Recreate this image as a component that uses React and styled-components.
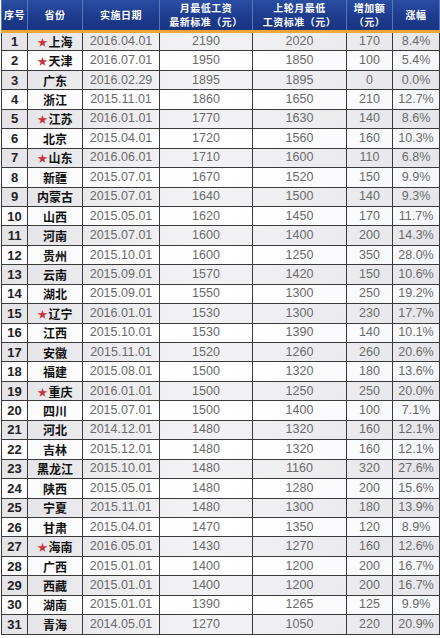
import styled, { createGlobalStyle } from 'styled-components'

const GlobalStyle = createGlobalStyle`
  html, body {
    margin: 0;
    padding: 0;
    background: #fff;
  }
  body {
    font-family: "Liberation Sans", "Noto Sans CJK SC", sans-serif;
  }
`

const rows = [
  [1, '上海', true, '2016.04.01', 2190, 2020, 170, '8.4%'],
  [2, '天津', true, '2016.07.01', 1950, 1850, 100, '5.4%'],
  [3, '广东', false, '2016.02.29', 1895, 1895, 0, '0.0%'],
  [4, '浙江', false, '2015.11.01', 1860, 1650, 210, '12.7%'],
  [5, '江苏', true, '2016.01.01', 1770, 1630, 140, '8.6%'],
  [6, '北京', false, '2015.04.01', 1720, 1560, 160, '10.3%'],
  [7, '山东', true, '2016.06.01', 1710, 1600, 110, '6.8%'],
  [8, '新疆', false, '2015.07.01', 1670, 1520, 150, '9.9%'],
  [9, '内蒙古', false, '2015.07.01', 1640, 1500, 140, '9.3%'],
  [10, '山西', false, '2015.05.01', 1620, 1450, 170, '11.7%'],
  [11, '河南', false, '2015.07.01', 1600, 1400, 200, '14.3%'],
  [12, '贵州', false, '2015.10.01', 1600, 1250, 350, '28.0%'],
  [13, '云南', false, '2015.09.01', 1570, 1420, 150, '10.6%'],
  [14, '湖北', false, '2015.09.01', 1550, 1300, 250, '19.2%'],
  [15, '辽宁', true, '2016.01.01', 1530, 1300, 230, '17.7%'],
  [16, '江西', false, '2015.10.01', 1530, 1390, 140, '10.1%'],
  [17, '安徽', false, '2015.11.01', 1520, 1260, 260, '20.6%'],
  [18, '福建', false, '2015.08.01', 1500, 1320, 180, '13.6%'],
  [19, '重庆', true, '2016.01.01', 1500, 1250, 250, '20.0%'],
  [20, '四川', false, '2015.07.01', 1500, 1400, 100, '7.1%'],
  [21, '河北', false, '2014.12.01', 1480, 1320, 160, '12.1%'],
  [22, '吉林', false, '2015.12.01', 1480, 1320, 160, '12.1%'],
  [23, '黑龙江', false, '2015.10.01', 1480, 1160, 320, '27.6%'],
  [24, '陕西', false, '2015.05.01', 1480, 1280, 200, '15.6%'],
  [25, '宁夏', false, '2015.11.01', 1480, 1300, 180, '13.9%'],
  [26, '甘肃', false, '2015.04.01', 1470, 1350, 120, '8.9%'],
  [27, '海南', true, '2016.05.01', 1430, 1270, 160, '12.6%'],
  [28, '广西', false, '2015.01.01', 1400, 1200, 200, '16.7%'],
  [29, '西藏', false, '2015.01.01', 1400, 1200, 200, '16.7%'],
  [30, '湖南', false, '2015.01.01', 1390, 1265, 125, '9.9%'],
  [31, '青海', false, '2014.05.01', 1270, 1050, 220, '20.9%']
]

const widths = [26, 55, 77, 93, 94, 46, 47]

export default function App() {
  return (
    <>
      <GlobalStyle />
      <Page>
        <Table>
          <colgroup>
            {widths.map((w, i) => (
              <col key={i} style={{ width: w }} />
            ))}
          </colgroup>
          <thead>
            <tr>
              <Head>序号</Head>
              <Head>省份</Head>
              <Head>实施日期</Head>
              <Head>月最低工资<br />最新标准（元）</Head>
              <Head>上轮月最低<br />工资标准（元）</Head>
              <Head>增加额<br />（元）</Head>
              <Head>涨幅</Head>
            </tr>
          </thead>
          <tbody>
            {rows.map(([no, prov, star, date, now, prev, inc, pct]) => (
              <Row key={no} $odd={no % 2 === 1}>
                <NoCell>{no}</NoCell>
                <ProvCell>
                  {star && <Star>★</Star>}
                  {prov}
                </ProvCell>
                <Cell>{date}</Cell>
                <Cell>{now}</Cell>
                <Cell>{prev}</Cell>
                <Cell>{inc}</Cell>
                <Cell>{pct}</Cell>
              </Row>
            ))}
          </tbody>
        </Table>
      </Page>
    </>
  )
}

const Page = styled.div`
  padding: 0 1px;
  width: 438px;
`

const Table = styled.table`
  width: 438px;
  table-layout: fixed;
  border-collapse: collapse;
`

const Head = styled.th`
  height: 30px;
  padding: 0;
  background: linear-gradient(to bottom, #2a4ea3 0%, #1c3a8c 60%, #183381 100%);
  border-left: 1px solid #5876b8;
  border-right: 1px solid #5876b8;
  border-bottom: 3px solid #f0a53a;
  color: #fff;
  font-family: "Noto Sans CJK SC", sans-serif;
  font-size: 10px;
  font-weight: 700;
  line-height: 14px;
  letter-spacing: 0.5px;
  text-align: center;
  vertical-align: middle;
`

const Row = styled.tr`
  height: 19.45px;
  background: ${({ $odd }) =>
    $odd
      ? 'linear-gradient(100deg, #e4e4e8 0%, #f3f3f5 45%, #e6e6ea 100%)'
      : 'linear-gradient(100deg, #fbfbfd 0%, #ffffff 50%, #f6f7fa 100%)'};
`

const Cell = styled.td`
  padding: 0;
  border: 1px solid #3a3a3a;
  color: #6a6a6a;
  font-size: 12.5px;
  text-align: center;
  vertical-align: middle;
  line-height: 17px;
  white-space: nowrap;
`

const NoCell = styled(Cell)`
  color: #222;
  font-weight: 700;
  font-size: 13px;
`

const ProvCell = styled(Cell)`
  color: #111;
  font-family: "Noto Sans CJK SC", sans-serif;
  font-weight: 700;
  font-size: 12px;
`

const Star = styled.span`
  color: #c8343e;
  font-size: 10px;
  margin-right: 1px;
  vertical-align: 1px;
`
